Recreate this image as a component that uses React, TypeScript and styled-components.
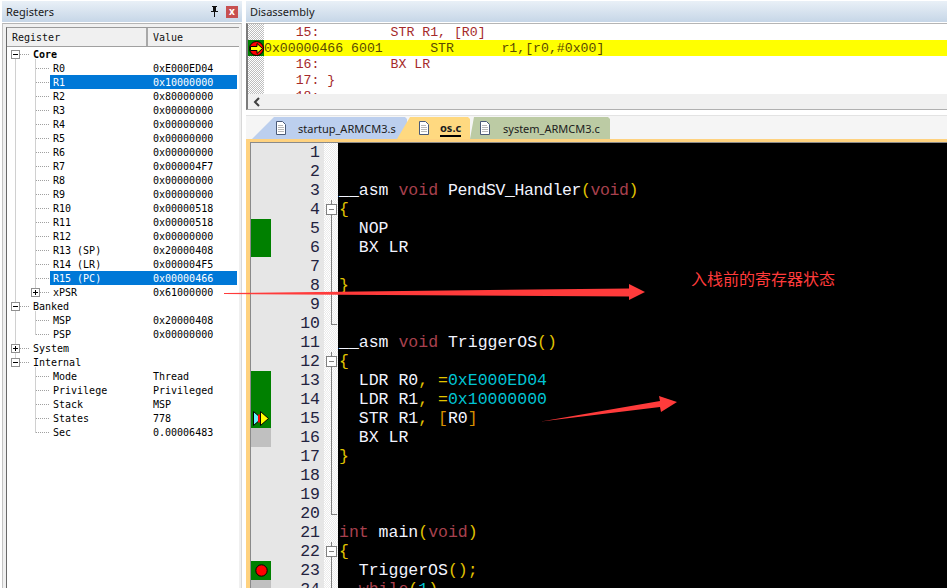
import React from "react";
import styled, { createGlobalStyle } from "styled-components";

const GlobalStyle = createGlobalStyle`
  html, body {
    margin: 0;
    padding: 0;
    background: #ffffff;
    overflow: hidden;
  }
`;

const Page = styled.div`
  position: relative;
  width: 947px;
  height: 588px;
  overflow: hidden;
  display: flex;
  background: #ffffff;
  font-family: "Liberation Sans", sans-serif;
`;

const LeftPanel = styled.div`
  width: 240px;
  margin-left: 2px;
  margin-top: 1px;
  display: flex;
  flex-direction: column;
  flex: none;
`;

const RightPanel = styled.div`
  margin-left: 4px;
  margin-top: 1px;
  width: 701px;
  display: flex;
  flex-direction: column;
  flex: none;
`;

const TitleBar = styled.div`
  height: 21px;
  flex: none;
  display: flex;
  align-items: center;
  justify-content: space-between;
  padding-left: 4px;
  background: linear-gradient(#e9f0f7, #c6d6e7);
  font-family: "Noto Sans", sans-serif;
  font-size: 11px;
  color: #1a1a1a;
`;

const TitleButtons = styled.div`
  display: flex;
  align-items: center;
  gap: 7px;
  padding-right: 4px;
`;

const CloseButton = styled.div`
  width: 12px;
  height: 12px;
  background: #c75050;
  color: #ffffff;
  font-size: 10px;
  font-weight: bold;
  line-height: 11px;
  text-align: center;
`;

const RegistersBody = styled.div`
  flex: 1;
  margin-top: 1px;
  border-top: 1px solid #b5b5b5;
  border-left: 1px solid #c4c4c4;
  border-right: 1px solid #d8d8d8;
  background: #f0f0f0;
  padding: 3px 1px 0 3px;
  display: flex;
`;

const TreeFrame = styled.div`
  flex: 1;
  border-left: 1px solid #696969;
  border-top: 1px solid #9a9a9a;
  background: #ffffff;
  margin-right: 1px;
  display: flex;
  flex-direction: column;
`;

const TreeHeader = styled.div`
  height: 18px;
  flex: none;
  display: flex;
  background: #f0f0f0;
  border-bottom: 1px solid #a0a0a0;
  font-family: "DejaVu Sans Mono", monospace;
  font-size: 10px;
  color: #111111;
`;

const HeaderCell = styled.div<{ $width: number }>`
  width: ${(p) => p.$width}px;
  flex: none;
  display: flex;
  align-items: center;
  padding-left: 5px;
  box-sizing: border-box;
  border-right: 2px solid #a8a8a8;
  &:last-child {
    border-right: none;
    padding-left: 5px;
  }
`;

const TreeBody = styled.div`
  position: relative;
  flex: 1;
`;

const TreeGuides = styled.svg`
  position: absolute;
  left: 0;
  top: 0;
`;

const TreeRow = styled.div<{ $level: number }>`
  position: relative;
  height: 14px;
  display: flex;
  align-items: center;
  padding-left: ${(p) => (p.$level === 0 ? 26 : 46)}px;
  font-family: "DejaVu Sans Mono", monospace;
  font-size: 10px;
  color: #000000;
`;

const RowLabel = styled.div<{ $selected?: boolean; $bold?: boolean }>`
  width: 100px;
  flex: none;
  font-weight: ${(p) => (p.$bold ? "bold" : "normal")};
  color: ${(p) => (p.$selected ? "#ffffff" : "inherit")};
  white-space: pre;
`;

const RowValue = styled.div<{ $selected?: boolean }>`
  color: ${(p) => (p.$selected ? "#ffffff" : "inherit")};
`;

const Selection = styled.div`
  display: flex;
  align-items: center;
  height: 14px;
  width: 187px;
  margin-left: -3px;
  padding-left: 3px;
  box-sizing: border-box;
  background: #0078d7;
`;

const ExpandBox = styled.div<{ $x: number }>`
  position: absolute;
  left: ${(p) => p.$x}px;
  top: 3px;
  width: 7px;
  height: 7px;
  border: 1px solid #8f8f8f;
  background: #ffffff;
  display: flex;
  align-items: center;
  justify-content: center;
  &::before {
    content: "";
    width: 5px;
    height: 1px;
    background: #000000;
  }
`;

const ExpandPlus = styled.div`
  position: absolute;
  width: 1px;
  height: 5px;
  left: 3px;
  top: 1px;
  background: #000000;
`;

const DisasmPane = styled.div`
  height: 85px;
  flex: none;
  margin-top: 1px;
  border-top: 1px solid #b5b5b5;
  border-left: 2px solid #7b7b7b;
  border-bottom: 1px solid #b0b0b0;
  display: flex;
  flex-direction: column;
  background: #ffffff;
`;

const DisasmRows = styled.div`
  height: 70px;
  overflow: hidden;
  flex: none;
  font-family: "Liberation Mono", monospace;
  font-size: 13.2px;
  color: #a52a2a;
`;

const DisasmRow = styled.div<{ $current?: boolean }>`
  height: 16px;
  display: flex;
  align-items: center;
  white-space: pre;
  background: ${(p) => (p.$current ? "#ffff00" : "#ffffff")};
  color: ${(p) => (p.$current ? "#5a4a00" : "#a52a2a")};
`;

const DisasmGutter = styled.div<{ $current?: boolean }>`
  width: 16px;
  height: 16px;
  flex: none;
  display: flex;
  align-items: center;
  justify-content: center;
  background: ${(p) =>
    p.$current
      ? "#008000"
      : "repeating-conic-gradient(#bdbdbd 0 25%, #ffffff 0 50%) 0 0 / 2px 2px"};
`;

const ScrollBar = styled.div`
  flex: 1;
  background: #f0f0f0;
  display: flex;
  align-items: center;
  padding-left: 5px;
`;

const TabStrip = styled.div`
  height: 23px;
  margin-top: 5px;
  flex: none;
  display: flex;
  align-items: flex-end;
  padding-left: 6px;
  background: #f5f5f5;
  border-top: 1px solid #e3e3e3;
  font-family: "Noto Sans", sans-serif;
  font-size: 11px;
  color: #202020;
`;

interface TabProps {
  $bg: string;
  $width: number;
  $pad: number;
  $gap: number;
  $slope: number;
  $overlap?: number;
  $active?: boolean;
}

const Tab = styled.div<TabProps>`
  width: ${(p) => p.$width}px;
  height: 22px;
  flex: none;
  display: flex;
  align-items: center;
  gap: ${(p) => p.$gap}px;
  padding-left: ${(p) => p.$pad}px;
  box-sizing: border-box;
  margin-left: ${(p) => -(p.$overlap ?? 0)}px;
  background: ${(p) => p.$bg};
  clip-path: polygon(0 100%, ${(p) => p.$slope}px 0, calc(100% - 2px) 0, 100% 2px, 100% 100%);
  position: relative;
  z-index: ${(p) => (p.$active ? 2 : 1)};
`;

const TabLabel = styled.span<{ $active?: boolean }>`
  font-weight: ${(p) => (p.$active ? "bold" : "normal")};
  border-bottom: ${(p) => (p.$active ? "2px solid #000000" : "none")};
  line-height: 15px;
`;

const EditorFrame = styled.div`
  flex: 1;
  min-height: 0;
  border-top: 3px solid #ffd27f;
  border-left: 4px solid #ffd27f;
  overflow: hidden;
`;

const EditorInner = styled.div`
  border-top: 1px solid #8a8a8a;
  border-left: 1px solid #8a8a8a;
  height: 100%;
  background: #000000;
`;

const CodeLine = styled.div`
  height: 19px;
  display: flex;
  font-family: "Liberation Mono", monospace;
  font-size: 16.5px;
  line-height: 19px;
  white-space: pre;
`;

const Marker = styled.div<{ $kind?: string }>`
  width: 20px;
  height: 19px;
  flex: none;
  display: flex;
  align-items: center;
  justify-content: center;
  background: ${(p) =>
    p.$kind === "green" ? "#008000" : p.$kind === "grey" ? "#c0c0c0" : "#e6e6e6"};
`;

const LineNumber = styled.div`
  width: 53px;
  padding-right: 4px;
  box-sizing: border-box;
  flex: none;
  text-align: right;
  background: #e6e6e6;
  color: #23233f;
`;

const FoldCell = styled.div<{ $kind?: string }>`
  position: relative;
  width: 14px;
  flex: none;
  background: repeating-conic-gradient(#ebebeb 0 25%, #ffffff 0 50%) 0 0 / 2px 2px;
  &::before {
    content: "";
    display: ${(p) => (p.$kind ? "block" : "none")};
    position: absolute;
    left: 7px;
    top: 0;
    width: 1px;
    height: ${(p) => (p.$kind === "end" ? "10px" : "19px")};
    background: #808080;
  }
  &::after {
    content: "";
    display: ${(p) => (p.$kind === "end" ? "block" : "none")};
    position: absolute;
    left: 7px;
    top: 10px;
    width: 6px;
    height: 1px;
    background: #808080;
  }
`;

const FoldBox = styled.div`
  position: absolute;
  z-index: 1;
  left: 2px;
  top: 4px;
  width: 9px;
  height: 9px;
  border: 1px solid #808080;
  background: #ffffff;
  display: flex;
  align-items: center;
  justify-content: center;
  &::before {
    content: "";
    width: 5px;
    height: 1px;
    background: #808080;
  }
`;

const CodeText = styled.div`
  padding-left: 1px;
  color: #f2f4ff;
`;

const Token = styled.span<{ $c: string }>`
  color: ${(p) => p.$c};
`;

const Tight = styled.span`
  letter-spacing: -0.4px;
`;

const Overlay = styled.svg`
  position: absolute;
  left: 0;
  top: 0;
  pointer-events: none;
  z-index: 5;
`;

const Note = styled.div`
  position: absolute;
  left: 691px;
  top: 268px;
  z-index: 5;
  font-family: "Noto Sans CJK SC", sans-serif;
  font-size: 16px;
  line-height: 20px;
  color: #ff3b3b;
`;

interface Reg {
  label: string;
  value?: string;
  level: number;
  box?: "open" | "closed";
  bold?: boolean;
  selected?: boolean;
}

const regs: Reg[] = [
  { label: "Core", level: 0, box: "open", bold: true },
  { label: "R0", value: "0xE000ED04", level: 1 },
  { label: "R1", value: "0x10000000", level: 1, selected: true },
  { label: "R2", value: "0x80000000", level: 1 },
  { label: "R3", value: "0x00000000", level: 1 },
  { label: "R4", value: "0x00000000", level: 1 },
  { label: "R5", value: "0x00000000", level: 1 },
  { label: "R6", value: "0x00000000", level: 1 },
  { label: "R7", value: "0x000004F7", level: 1 },
  { label: "R8", value: "0x00000000", level: 1 },
  { label: "R9", value: "0x00000000", level: 1 },
  { label: "R10", value: "0x00000518", level: 1 },
  { label: "R11", value: "0x00000518", level: 1 },
  { label: "R12", value: "0x00000000", level: 1 },
  { label: "R13 (SP)", value: "0x20000408", level: 1 },
  { label: "R14 (LR)", value: "0x000004F5", level: 1 },
  { label: "R15 (PC)", value: "0x00000466", level: 1, selected: true },
  { label: "xPSR", value: "0x61000000", level: 1, box: "closed" },
  { label: "Banked", level: 0, box: "open" },
  { label: "MSP", value: "0x20000408", level: 1 },
  { label: "PSP", value: "0x00000000", level: 1 },
  { label: "System", level: 0, box: "closed" },
  { label: "Internal", level: 0, box: "open" },
  { label: "Mode", value: "Thread", level: 1 },
  { label: "Privilege", value: "Privileged", level: 1 },
  { label: "Stack", value: "MSP", level: 1 },
  { label: "States", value: "778", level: 1 },
  { label: "Sec", value: "0.00006483", level: 1 },
];

const KW = "#a8404e";
const PUNCT = "#e0c400";
const BRACKET = "#d89000";
const NUM = "#00c4d4";

type Part = string | [string, string];

interface Line {
  marker?: "green" | "grey";
  fold?: "box" | "stem" | "end";
  icon?: "exec" | "break";
  parts?: Part[];
  tight?: Part[];
}

const lines: Line[] = [
  {},
  {},
  {
    parts: ["__asm ", [KW, "void"], " "],
    tight: ["PendSV_Handler", [PUNCT, "("], [KW, "void"], [PUNCT, ")"]],
  },
  { fold: "box", parts: [[PUNCT, "{"]] },
  { marker: "green", fold: "stem", parts: ["  NOP"] },
  { marker: "green", fold: "stem", parts: ["  BX LR"] },
  { fold: "stem" },
  { fold: "stem", parts: [[PUNCT, "}"]] },
  { fold: "stem" },
  { fold: "end" },
  { parts: ["__asm ", [KW, "void"], " TriggerOS", [PUNCT, "()"]] },
  { fold: "box", parts: [[PUNCT, "{"]] },
  { marker: "green", fold: "stem", parts: ["  LDR R0", [PUNCT, ", ="], [NUM, "0xE000ED04"]] },
  { marker: "green", fold: "stem", parts: ["  LDR R1", [PUNCT, ", ="], [NUM, "0x10000000"]] },
  { marker: "green", fold: "stem", icon: "exec", parts: ["  STR R1", [PUNCT, ", "], [BRACKET, "["], "R0", [BRACKET, "]"]] },
  { marker: "grey", fold: "stem", parts: ["  BX LR"] },
  { fold: "stem", parts: [[PUNCT, "}"]] },
  { fold: "stem" },
  { fold: "stem" },
  { fold: "end" },
  { parts: [[KW, "int"], " main", [PUNCT, "("], [KW, "void"], [PUNCT, ")"]] },
  { fold: "box", parts: [[PUNCT, "{"]] },
  { marker: "green", fold: "stem", icon: "break", parts: ["  TriggerOS", [PUNCT, "();"]] },
  { marker: "grey", fold: "stem", parts: ["  ", [KW, "while"], [PUNCT, "("], [NUM, "1"], [PUNCT, ")"]] },
];

function DocIcon() {
  return (
    <svg width="12" height="14" viewBox="0 0 12 14">
      <path d="M1.5.5h6l3 3v10h-9z" fill="#ffffff" stroke="#4a5a78" />
      <path d="M3 4h5v1H3zM3 6h6v1H3zM3 8h6v1H3zM3 10h6v1H3z" fill="#b8b8b8" />
    </svg>
  );
}

function CurrentArrow() {
  return (
    <svg width="15" height="15" viewBox="0 0 15 15">
      <circle cx="7.5" cy="7.5" r="7" fill="#ff0000" stroke="#000000" />
      <path d="M1.5 5.5h6.5V2.5l5.5 5-5.5 5v-3H1.5z" fill="#ffff00" stroke="#000000" />
    </svg>
  );
}

function ExecIcon() {
  return (
    <svg width="16" height="15" viewBox="0 0 16 15">
      <path d="M.5.5v14l8-7z" fill="#66f0ff" stroke="#000000" />
      <path d="M5 3.5h3v8H5z" fill="#ff0000" />
      <path d="M7.5.5v14l8-7z" fill="#ffff00" stroke="#000000" />
    </svg>
  );
}

function BreakIcon() {
  return (
    <svg width="13" height="13" viewBox="0 0 13 13">
      <circle cx="6.5" cy="6.5" r="5.7" fill="#ff0000" stroke="#000000" />
    </svg>
  );
}

function PinIcon() {
  return (
    <svg width="9" height="11" viewBox="0 0 9 11">
      <path d="M2 0h5v1H6v4h2v1H5v5H4V6H1V5h2V1H2z" fill="#111111" />
    </svg>
  );
}

function Guides() {
  // dotted tree lines, y values are row centres inside the tree body
  const y = (row: number) => row * 14 + 7.5;
  const segs: [number, number, number, number][] = [
    [8.5, y(0), 8.5, y(22)],
    [13, y(0), 23, y(0)],
    [13, y(18), 23, y(18)],
    [13, y(21), 23, y(21)],
    [13, y(22), 23, y(22)],
    [28.5, y(0) + 5, 28.5, y(17)],
    [28.5, y(18) + 5, 28.5, y(20)],
    [28.5, y(22) + 5, 28.5, y(27)],
  ];
  regs.forEach((r, i) => {
    if (r.level === 1) segs.push([r.box ? 33 : 29, y(i), 43, y(i)]);
  });
  return (
    <TreeGuides width="230" height="420">
      {segs.map(([a, b, c, d], i) => (
        <line key={i} x1={a} y1={b} x2={c} y2={d} stroke="#a0a0a0" strokeDasharray="1 1" />
      ))}
    </TreeGuides>
  );
}

function RegisterRow({ reg }: { reg: Reg }) {
  const content = (
    <>
      <RowLabel $selected={reg.selected} $bold={reg.bold}>{reg.label}</RowLabel>
      <RowValue $selected={reg.selected}>{reg.value}</RowValue>
    </>
  );
  return (
    <TreeRow $level={reg.level}>
      {reg.box && (
        <ExpandBox $x={reg.level === 0 ? 4 : 24}>
          {reg.box === "closed" && <ExpandPlus />}
        </ExpandBox>
      )}
      {reg.selected ? <Selection>{content}</Selection> : content}
    </TreeRow>
  );
}

function renderParts(parts?: Part[]) {
  return parts?.map((part, i) =>
    typeof part === "string" ? (
      <span key={i}>{part}</span>
    ) : (
      <Token key={i} $c={part[0]}>{part[1]}</Token>
    )
  );
}

function EditorLine({ line, n }: { line: Line; n: number }) {
  return (
    <CodeLine>
      <Marker $kind={line.marker}>
        {line.icon === "exec" && <ExecIcon />}
        {line.icon === "break" && <BreakIcon />}
      </Marker>
      <LineNumber>{n}</LineNumber>
      <FoldCell $kind={line.fold}>{line.fold === "box" && <FoldBox />}</FoldCell>
      <CodeText>
        {renderParts(line.parts)}
        {line.tight && <Tight>{renderParts(line.tight)}</Tight>}
      </CodeText>
    </CodeLine>
  );
}

export default function App(): JSX.Element {
  return (
    <Page>
      <GlobalStyle />
      <LeftPanel>
        <TitleBar>
          Registers
          <TitleButtons>
            <PinIcon />
            <CloseButton>x</CloseButton>
          </TitleButtons>
        </TitleBar>
        <RegistersBody>
          <TreeFrame>
            <TreeHeader>
              <HeaderCell $width={141}>Register</HeaderCell>
              <HeaderCell $width={89}>Value</HeaderCell>
            </TreeHeader>
            <TreeBody>
              <Guides />
              {regs.map((reg) => (
                <RegisterRow key={reg.label} reg={reg} />
              ))}
            </TreeBody>
          </TreeFrame>
        </RegistersBody>
      </LeftPanel>
      <RightPanel>
        <TitleBar>Disassembly</TitleBar>
        <DisasmPane>
          <DisasmRows>
            <DisasmRow>
              <DisasmGutter />
              {"    15:         STR R1, [R0]"}
            </DisasmRow>
            <DisasmRow $current>
              <DisasmGutter $current><CurrentArrow /></DisasmGutter>
              {"0x00000466 6001      STR      r1,[r0,#0x00]"}
            </DisasmRow>
            <DisasmRow>
              <DisasmGutter />
              {"    16:         BX LR"}
            </DisasmRow>
            <DisasmRow>
              <DisasmGutter />
              {"    17: }"}
            </DisasmRow>
            <DisasmRow>
              <DisasmGutter />
              {"    18:"}
            </DisasmRow>
          </DisasmRows>
          <ScrollBar>
            <svg width="8" height="10" viewBox="0 0 8 10">
              <path d="M6 1L2 5l4 4" fill="none" stroke="#404040" strokeWidth="2" />
            </svg>
          </ScrollBar>
        </DisasmPane>
        <TabStrip>
          <Tab $bg="#bccfee" $width={155} $pad={23} $gap={11} $slope={22}>
            <DocIcon />
            <TabLabel>startup_ARMCM3.s</TabLabel>
          </Tab>
          <Tab $bg="#ffd980" $width={73} $pad={21} $gap={10} $slope={13} $overlap={10} $active>
            <DocIcon />
            <TabLabel $active>os.c</TabLabel>
          </Tab>
          <Tab $bg="#bccba4" $width={140} $pad={9} $gap={12} $slope={4}>
            <DocIcon />
            <TabLabel>system_ARMCM3.c</TabLabel>
          </Tab>
        </TabStrip>
        <EditorFrame>
          <EditorInner>
            {lines.map((line, i) => (
              <EditorLine key={i} line={line} n={i + 1} />
            ))}
          </EditorInner>
        </EditorFrame>
      </RightPanel>
      <Note>入栈前的寄存器状态</Note>
      <Overlay width="947" height="588" viewBox="0 0 947 588">
        <path d="M224 293V294L629 296.5V300L645 292L629 284V288.5Z" fill="#ff3b3b" />
        <path d="M541 421.5L660 401L659 396L677 402L661 412L660 407Z" fill="#ff3b3b" />
      </Overlay>
    </Page>
  );
}
